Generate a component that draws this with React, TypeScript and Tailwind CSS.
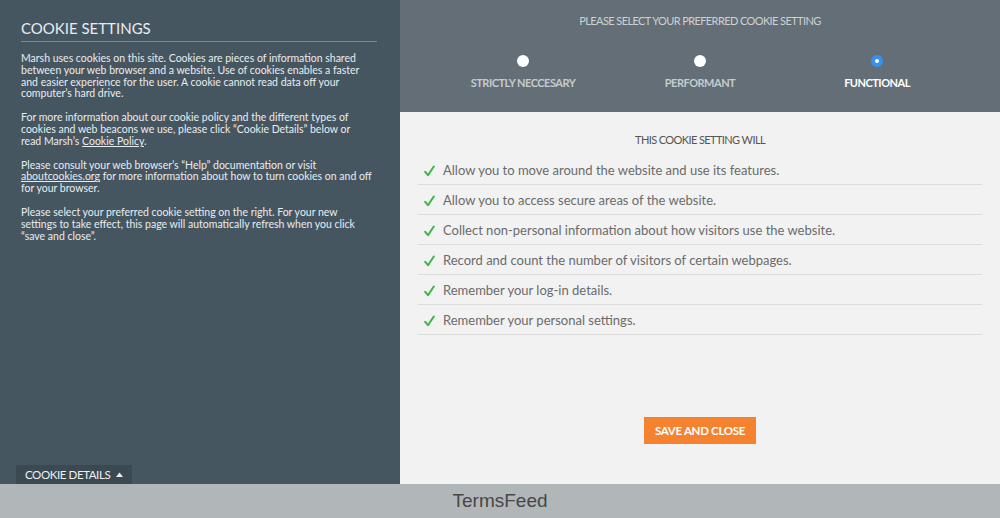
import React, { useState } from 'react';

const levels = ['STRICTLY NECCESARY', 'PERFORMANT', 'FUNCTIONAL'];

const features = [
  'Allow you to move around the website and use its features.',
  'Allow you to access secure areas of the website.',
  'Collect non-personal information about how visitors use the website.',
  'Record and count the number of visitors of certain webpages.',
  'Remember your log-in details.',
  'Remember your personal settings.',
];

function Check() {
  return (
    <svg width="11" height="12" viewBox="0 0 11 12" className="shrink-0">
      <path d="M1.2 6.8 L4 10.2 L9.8 1.5" fill="none" stroke="#3cb54a" strokeWidth="2" strokeLinecap="round" strokeLinejoin="round" />
    </svg>
  );
}

export default function App() {
  const [level, setLevel] = useState(2);

  return (
    <div className="w-[1000px] h-[518px] flex flex-col overflow-hidden font-['Lato','Open_Sans',sans-serif]">
      <div className="flex h-[484px]">
        {/* left: explanation */}
        <div className="w-[400px] bg-[#465661] px-[21px] pt-[18px] flex flex-col text-[#e9ecee]">
          <h1 className="text-[15px] leading-[21px] pb-[2px] border-b border-[#808586] mr-[2px]">COOKIE SETTINGS</h1>
          <div className="mt-[11px] text-[10.5px] leading-[11.8px] space-y-[12px] w-[353px]">
            <p>
              Marsh uses cookies on this site. Cookies are pieces of information shared between your web browser and a website. Use of cookies enables a faster and easier experience for the user. A cookie cannot read data off your computer’s hard drive.
            </p>
            <p>
              For more information about our cookie policy and the different types of cookies and web beacons we use, please click “Cookie Details” below or<br />read Marsh’s <span className="underline">Cookie Policy</span>.
            </p>
            <p>
              Please consult your web browser’s “Help” documentation or visit <span className="underline">aboutcookies.org</span> for more information about how to turn cookies on and off for your browser.
            </p>
            <p>
              Please select your preferred cookie setting on the right. For your new settings to take effect, this page will automatically refresh when you click “save and close”.
            </p>
          </div>
          <div className="mt-auto">
            <button className="ml-[-5px] h-[19px] px-[9px] bg-[#3b4952] text-[11.5px] tracking-[-0.4px] leading-[19px] flex items-center gap-[6px] text-[#eef0f1]">
              COOKIE DETAILS
              <svg width="7" height="5" viewBox="0 0 7 5"><path d="M0 5 L3.5 0.5 L7 5 Z" fill="#eef0f1" /></svg>
            </button>
          </div>
        </div>

        {/* right: level picker and details */}
        <div className="flex-1 flex flex-col bg-[#f2f2f2]">
          <div className="h-[112px] bg-[#636e77] flex flex-col items-center pt-[14px]">
            <div className="text-[11px] leading-[14px] text-[#cdd1d4] tracking-[-0.6px]">PLEASE SELECT YOUR PREFERRED COOKIE SETTING</div>
            <div className="mt-[27px] flex w-[531px]">
              {levels.map((l, i) => (
                <button key={l} onClick={() => setLevel(i)} className="flex-1 flex flex-col items-center">
                  {i === level ? (
                    <span className="w-[12px] h-[12px] rounded-full bg-[#3a8ff2] flex items-center justify-center">
                      <span className="w-[4px] h-[4px] rounded-full bg-white" />
                    </span>
                  ) : (
                    <span className="w-[12px] h-[12px] rounded-full bg-white" />
                  )}
                  <span className={`mt-[9px] text-[11px] tracking-[-0.5px] leading-[14px] font-bold ${i === level ? 'text-white' : 'text-[#c6cbce]'}`}>{l}</span>
                </button>
              ))}
            </div>
          </div>

          <div className="flex-1 flex flex-col px-[18px]">
            <div className="text-center text-[11px] tracking-[-0.6px] leading-[14px] text-[#555] mt-[21px] mb-[8px]">THIS COOKIE SETTING WILL</div>
            <ul>
              {features.map((f) => (
                <li key={f} className="h-[30px] flex items-center gap-[8px] pl-[6px] pt-[2px] border-b border-[#dcdcdc] text-[13px] text-[#6b6b6b]">
                  <Check />
                  <span>{f}</span>
                </li>
              ))}
            </ul>
            <div className="flex justify-center mt-[82px]">
              <button className="w-[112px] h-[27px] bg-[#f5822f] text-white text-[11.5px] tracking-[-0.3px] font-bold">SAVE AND CLOSE</button>
            </div>
          </div>
        </div>
      </div>

      <div className="h-[34px] bg-[#b1b6b9] flex items-center justify-center font-['Liberation_Sans',Arial,sans-serif] text-[19px] text-[#474747]">
        TermsFeed
      </div>
    </div>
  );
}
